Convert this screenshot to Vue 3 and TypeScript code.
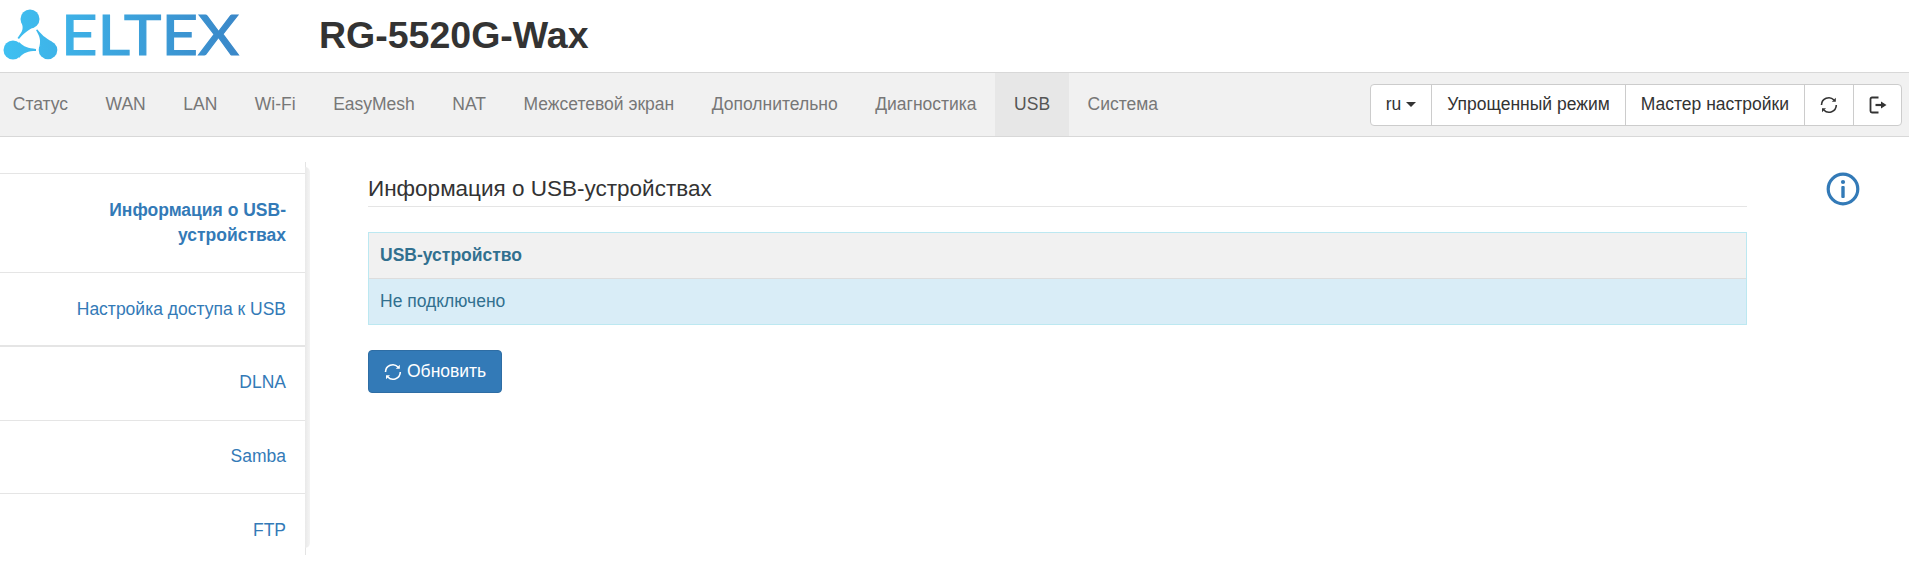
<script setup lang="ts">
const navItems = ['Статус', 'WAN', 'LAN', 'Wi-Fi', 'EasyMesh', 'NAT', 'Межсетевой экран', 'Дополнительно', 'Диагностика', 'USB', 'Система']
const sideItems = ['Информация о USB-устройствах', 'Настройка доступа к USB', 'DLNA', 'Samba', 'FTP']
const activeNav = 'USB'
const activeSide = sideItems[0]
</script>

<template>
  <div class="page">
    <header class="top">
      <svg class="logo" width="250" height="72" viewBox="0 0 250 72" xmlns="http://www.w3.org/2000/svg">
        <defs>
          <linearGradient id="lg" gradientUnits="userSpaceOnUse" x1="0" y1="0" x2="240" y2="0">
            <stop offset="0" stop-color="#3fc1f2" />
            <stop offset="1" stop-color="#3a87c8" />
          </linearGradient>
        </defs>
        <g fill="url(#lg)">
          <circle cx="30" cy="19" r="9.500" />
          <circle cx="13" cy="50" r="9.500" />
          <circle cx="48" cy="50" r="9.300" />
          <path d="M22 24C24 30 21 33 17.500 38L19 39C23 34 27 31 35 26Z" />
          <path d="M19 42C24 47 28 48 36 49L36 51C28 51 24 52.500 19 58Z" />
          <path d="M39.500 46C41 40 39.500 36 36 30L37.500 29.500C41 34 45 38 52 41.500Z" />
        </g>
        <text class="wordmark" x="61" y="55" textLength="178" lengthAdjust="spacingAndGlyphs" fill="url(#lg)" stroke="url(#lg)">ELTEX</text>
      </svg>
      <h1 class="model">RG-5520G-Wax</h1>
    </header>

    <nav class="navbar">
      <ul class="tabs">
        <li v-for="item in navItems" :key="item" :class="{ active: item === activeNav }">{{ item }}</li>
      </ul>
      <div class="btn-group">
        <button class="lang">ru<span class="caret"></span></button>
        <button>Упрощенный режим</button>
        <button>Мастер настройки</button>
        <button class="icon-btn">
          <svg width="18" height="18" viewBox="0 0 18 18" fill="none" stroke="#333" stroke-width="1.600">
            <path d="M1.500 9A7.300 7.300 0 0 1 14 4" />
            <path d="M16.300 9A7.300 7.300 0 0 1 3.800 14" />
            <path d="M15.800 1.800v4h-4z" fill="#333" stroke="none" />
            <path d="M2 16.200v-4h4z" fill="#333" stroke="none" />
          </svg>
        </button>
        <button class="icon-btn">
          <svg width="18" height="18" viewBox="0 0 18 18" fill="none" stroke="#333" stroke-width="1.800">
            <path d="M9.500 1.500H3a1.500 1.500 0 0 0-1.500 1.500v12A1.500 1.500 0 0 0 3 16.500h6.500" />
            <path d="M6.500 9h6" stroke-width="2.200" />
            <path d="M12 5.500l5.500 3.500-5.500 3.500z" fill="#333" stroke="none" />
          </svg>
        </button>
      </div>
    </nav>

    <div class="body">
      <aside class="side">
        <div class="side-list">
          <a v-for="item in sideItems" :key="item" class="side-item" :class="{ current: item === activeSide }">{{ item }}</a>
        </div>
      </aside>

      <main class="content">
        <h2 class="title">Информация о USB-устройствах</h2>
        <div class="table">
          <div class="thead">USB-устройство</div>
          <div class="tbody">Не подключено</div>
        </div>
        <button class="refresh">
          <svg width="18" height="18" viewBox="0 0 18 18" fill="none" stroke="#fff" stroke-width="1.600">
            <path d="M1.500 9A7.300 7.300 0 0 1 14 4" />
            <path d="M16.300 9A7.300 7.300 0 0 1 3.800 14" />
            <path d="M15.800 1.800v4h-4z" fill="#fff" stroke="none" />
            <path d="M2 16.200v-4h4z" fill="#fff" stroke="none" />
          </svg>
          Обновить
        </button>
      </main>

      <div class="help">
        <svg width="36" height="36" viewBox="0 0 36 36">
          <circle cx="18" cy="18" r="14.800" fill="none" stroke="#337ab7" stroke-width="3.200" />
          <circle cx="18" cy="11" r="2.100" fill="#337ab7" />
          <rect x="16.300" y="15" width="3.400" height="12" rx="1" fill="#337ab7" />
        </svg>
      </div>
    </div>
  </div>
</template>

<style>
html,
body {
  margin: 0;
  background: #fff;
  overflow: hidden;
}
</style>

<style scoped>
.page {
  width: 1909px;
  height: 562px;
  overflow: hidden;
  font-family: 'Liberation Sans', Arial, sans-serif;
  font-size: 17.5px;
  line-height: 25px;
  color: #333;
}

.top {
  display: flex;
  align-items: center;
  height: 72px;
}

.logo {
  flex: none;
}

.wordmark {
  font-family: Lato, sans-serif;
  font-size: 57px;
  stroke-width: 1.2px;
}

.model {
  margin: 0 0 0 69px;
  font-size: 37.5px;
  font-weight: 700;
  line-height: 1;
}

.navbar {
  display: flex;
  justify-content: space-between;
  align-items: center;
  height: 63px;
  padding-right: 7px;
  background: #f1f1f1;
  border-top: 1px solid #d8d8d8;
  border-bottom: 1px solid #d8d8d8;
}

.tabs {
  display: flex;
  align-self: stretch;
  margin: 0 0 0 -6px;
  padding: 0;
  list-style: none;
}

.tabs li {
  display: flex;
  align-items: center;
  padding: 0 18.75px;
  color: #777;
}

.tabs li.active {
  background: #e7e7e7;
  color: #555;
}

.btn-group {
  display: flex;
  height: 42px;
  border: 1px solid #ccc;
  border-radius: 4px;
  background: #fff;
  box-sizing: border-box;
}

.btn-group button {
  display: flex;
  align-items: center;
  justify-content: center;
  padding: 0 15px;
  border: 0;
  border-left: 1px solid #ccc;
  background: none;
  font: inherit;
  color: #333;
}

.btn-group button:first-child {
  border-left: 0;
}

.btn-group .icon-btn {
  width: 49px;
  padding: 0;
}

.btn-group .icon-btn:last-child {
  width: 48px;
}

.caret {
  width: 0;
  height: 0;
  margin-left: 5px;
  border-top: 5px solid #333;
  border-left: 5px solid transparent;
  border-right: 5px solid transparent;
}

.body {
  display: flex;
  align-items: flex-start;
}

.side {
  position: relative;
  flex: none;
  box-sizing: border-box;
  width: 306px;
  height: 393px;
  margin-top: 25px;
  padding-top: 11px;
  border-right: 1px solid #e4e4e4;
}

/* soft shade on the right edge of the menu */
.side::after {
  content: '';
  position: absolute;
  top: 5px;
  bottom: 7px;
  left: 100%;
  width: 5px;
  background: linear-gradient(to right, #e9e9e9, #f4f4f4);
  border-radius: 0 5px 5px 0;
}

.side-list {
  height: 382px;
  overflow: hidden;
}

.side-item {
  display: block;
  padding: 24px 19px 24px 60px;
  border-top: 1px solid #e5e5e5;
  color: #337ab7;
  text-align: right;
}

.side-item:nth-child(3) {
  margin-top: -1px;
  padding: 23px 19px 25px 60px;
  border-top-width: 2px;
}

.side-item:nth-child(4) {
  padding-top: 23px;
  padding-bottom: 24px;
}

.side-item.current {
  font-weight: 700;
}

.content {
  flex: none;
  width: 1379px;
  margin-left: 62px;
  padding-top: 38px;
}

.title {
  margin: 0 0 25px;
  padding-bottom: 3px;
  border-bottom: 1px solid #e5e5e5;
  font-size: 22.5px;
  font-weight: 400;
  line-height: 28px;
}

.table {
  border: 1px solid #bce8f1;
}

.thead {
  padding: 10px 11px;
  background: #f1f1f1;
  color: #31708f;
  font-weight: 700;
  border-bottom: 1px solid #ddd;
}

.tbody {
  padding: 10px 11px;
  background: #d9edf7;
  color: #31708f;
}

.refresh {
  display: flex;
  align-items: center;
  gap: 5px;
  height: 43px;
  margin-top: 25px;
  padding: 0 15px;
  border: 1px solid #2e6da4;
  border-radius: 4px;
  background: #337ab7;
  color: #fff;
  font: inherit;
}

.help {
  flex: none;
  margin: 34px 0 0 78px;
}
</style>
